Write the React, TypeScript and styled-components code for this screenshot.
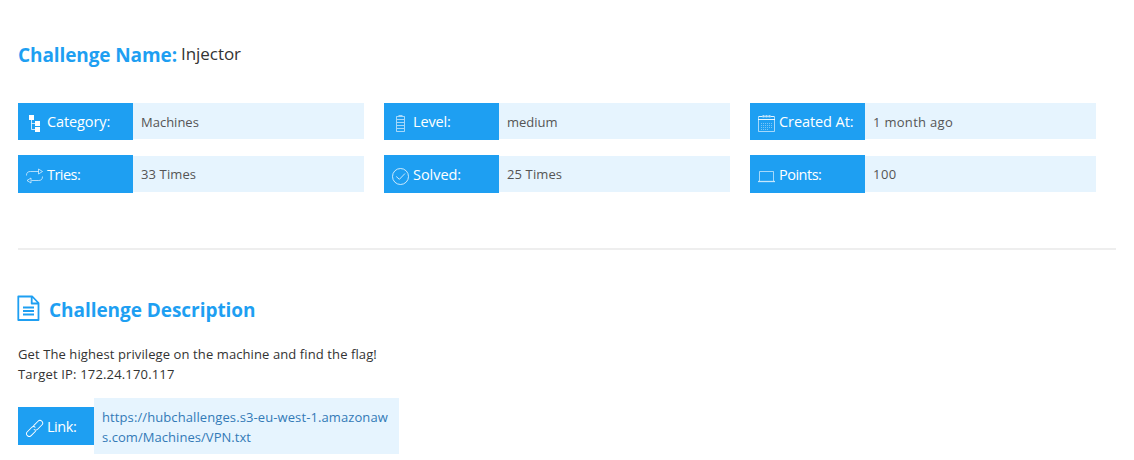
import React from "react";
import styled, { createGlobalStyle } from "styled-components";

const GlobalStyle = createGlobalStyle`
  * { box-sizing: border-box; }
  body {
    margin: 0;
    background: #fff;
    color: #333;
    font-family: "Segoe UI", "Open Sans", "Noto Sans", sans-serif;
    font-size: 13px;
    line-height: 20px;
  }
`;

const Page = styled.main`
  width: 1134px;
  height: 460px;
  padding: 40px 18px 0;
  overflow: hidden;
`;

const TitleRow = styled.header`
  display: flex;
  height: 63px;
  white-space: nowrap;
`;

const Heading = styled.h1<{ $spacing: number }>`
  margin: 0;
  font-size: 19px;
  font-weight: 700;
  line-height: 30px;
  letter-spacing: ${(p) => p.$spacing}px;
  color: #1e9ff2;
`;

const ChallengeName = styled.span`
  margin-left: 4px;
  font-size: 17px;
  line-height: 28px;
  letter-spacing: -0.05px;
`;

const Facts = styled.section`
  display: grid;
  grid-template-columns: repeat(3, 346px);
  grid-template-rows: 37px 38px;
  gap: 15px 20px;
`;

const Fact = styled.div`
  display: flex;
  align-items: flex-start;
`;

const Label = styled.div<{ $width?: number; $second?: boolean }>`
  display: flex;
  flex: none;
  width: ${(p) => p.$width ?? 115}px;
  height: ${(p) => (p.$second ? 38 : 37)}px;
  padding: ${(p) => (p.$second ? 9 : 8)}px 0 0 8px;
  background: #1e9ff2;
  color: #fff;
  font-size: 14.5px;
  line-height: 21px;
  white-space: nowrap;

  svg {
    flex: none;
    width: 18px;
    height: 18px;
    margin: 3px 3px 0 0;
  }
`;

const Tracked = styled.span<{ $spacing: number }>`
  letter-spacing: ${(p) => p.$spacing}px;
`;

const Value = styled.div<{ $second?: boolean }>`
  flex: 1;
  height: 36px;
  margin-top: ${(p) => (p.$second ? 1 : 0)}px;
  padding: ${(p) => (p.$second ? 8 : 9)}px 8px 0;
  background: #e6f4fe;
  color: #555;
  white-space: nowrap;
`;

const Divider = styled.hr`
  height: 2px;
  margin: 55px 0 45px;
  border: 0;
  background: #eee;
`;

const SectionTitle = styled.div`
  display: flex;
  height: 49px;

  svg {
    width: 23px;
    height: 26px;
    margin-right: 8px;
    overflow: visible;
  }
`;

const Description = styled.p`
  margin: 0 0 14px;
  white-space: nowrap;
`;

const LinkRow = styled.div`
  display: flex;
  align-items: center;
  width: 381px;
  height: 56px;
`;

const LinkBox = styled.div`
  flex: 1;
  height: 56px;
  padding: 9px 0 0 8px;
  background: #e6f4fe;
`;

const DownloadLink = styled.a`
  color: #337ab7;
  text-decoration: none;
  white-space: nowrap;
`;

const TreeIcon = () => (
  <svg viewBox="0 0 18 18" fill="#fff">
    <path d="M3 1h5v5H3zM9 7h5v5H9zM9 13h5v5H9z" />
    <path d="M5.5 6v9.5H9M5.5 9.5H9" fill="none" stroke="#fff" strokeOpacity=".75" />
  </svg>
);

const BatteryIcon = () => (
  <svg viewBox="0 0 18 18" fill="none" stroke="#fff" strokeOpacity=".6">
    <path d="M4.5 2.5h8v15h-8zM6.5 1.5h4" />
    <path d="M5 5.5h7M5 8.5h7M5 11.5h7M5 14.5h7" />
  </svg>
);

const CalendarIcon = () => (
  <svg viewBox="0 0 18 18" fill="none" stroke="#fff" strokeOpacity=".7">
    <path d="M.5 2.5h16v15H.5z" strokeOpacity=".6" />
    <path d="M0 5.5h17" strokeOpacity=".9" />
    <path d="M1 2.5h3M13 2.5h3" />
    <path d="M4.500 1.500h8M4.500 3h8" strokeDasharray="2 1" strokeWidth=".9" />
    <path d="M3 9.5h11M3 11.5h11M3 13.5h11M3 15.5h8" strokeDasharray="1 1" strokeOpacity=".4" />
  </svg>
);

const RepeatIcon = () => (
  <svg viewBox="0 0 18 18" fill="none" stroke="#fff" strokeOpacity=".65">
    <path d="M.5 8.500V8C.7 5.500 2 4.500 4.500 4.500h8M12.500 2v5l4-2.500zM16.500 9.500c0 3-1.500 4-4 4h-7M5 11v5L1 13.500z" />
  </svg>
);

const CheckIcon = () => (
  <svg viewBox="0 0 18 18" fill="none" stroke="#fff" strokeOpacity=".85" strokeWidth=".9">
    <circle cx="8.5" cy="9.5" r="8" />
    <path d="M4.200 9.500l3.200 2.800 5.600-5.800" />
  </svg>
);

const LaptopIcon = () => (
  <svg viewBox="0 0 18 18" fill="none" stroke="#fff" strokeOpacity=".75">
    <path d="M1.5 14V4.500h14V14" strokeWidth=".8" />
    <path d="M0 14.500h17" strokeWidth="1.300" />
  </svg>
);

const ChainIcon = () => (
  <svg viewBox="0 0 18 18" fill="none" stroke="#fff" strokeWidth=".95">
    <g transform="translate(-.3 .5) rotate(-45 9 9)">
      <path d="M8 11.500H1.500a2.700 2.700 0 0 1 0-5.400h6a2.700 2.700 0 0 1 2.700 2.700" />
      <path d="M10 6.200h6.500a2.700 2.700 0 0 1 0 5.400h-6a2.700 2.700 0 0 1-2.700-2.700" />
    </g>
  </svg>
);

const DocumentIcon = () => (
  <svg viewBox="0 0 23 26" fill="none" stroke="#1e9ff2" strokeWidth="1.800" strokeLinejoin="round">
    <path d="M.3 1.500h14L20.500 8V25H.3zM13.700 1.500V8.500h6.800M5 12.500h11M5 16h11M5 19.500h11" />
  </svg>
);

const facts = [
  { icon: <TreeIcon />, label: "Category:", value: "Machines", ls: -0.1, vs: 0 },
  { icon: <BatteryIcon />, label: "Level:", value: "medium", ls: -0.15, vs: 0 },
  { icon: <CalendarIcon />, label: "Created At:", value: "1 month ago", ls: -0.08, vs: 0.3 },
  { icon: <RepeatIcon />, label: "Tries:", value: "33 Times", ls: -0.55, vs: 0.12 },
  { icon: <CheckIcon />, label: "Solved:", value: "25 Times", ls: -0.05, vs: 0.12 },
  { icon: <LaptopIcon />, label: "Points:", value: "100", ls: -0.5, vs: 0.5 },
];

export default function App() {
  return (
    <Page>
      <GlobalStyle />
      <TitleRow>
        <Heading $spacing={-0.1}>Challenge Name:</Heading>
        <ChallengeName>Injector</ChallengeName>
      </TitleRow>
      <Facts>
        {facts.map((f, i) => (
          <Fact key={f.label}>
            <Label $second={i > 2}>
              {f.icon}
              <Tracked $spacing={f.ls}>{f.label}</Tracked>
            </Label>
            <Value $second={i > 2}>
              <Tracked $spacing={f.vs}>{f.value}</Tracked>
            </Value>
          </Fact>
        ))}
      </Facts>
      <Divider />
      <SectionTitle>
        <DocumentIcon />
        <Heading as="h2" $spacing={-0.05}>Challenge Description</Heading>
      </SectionTitle>
      <Description>
        <Tracked $spacing={0.1}>Get The highest privilege on the machine and find the flag!</Tracked>
        <br />
        <Tracked $spacing={0.17}>Target IP: 172.24.170.117</Tracked>
      </Description>
      <LinkRow>
        <Label $width={76} $second>
          <ChainIcon />
          <Tracked $spacing={-0.45}>Link:</Tracked>
        </Label>
        <LinkBox>
          <DownloadLink href="https://hubchallenges.s3-eu-west-1.amazonaws.com/Machines/VPN.txt">
            <Tracked $spacing={0.1}>https://hubchallenges.s3-eu-west-1.amazonaw</Tracked>
            <br />
            <Tracked $spacing={0.05}>s.com/Machines/VPN.txt</Tracked>
          </DownloadLink>
        </LinkBox>
      </LinkRow>
    </Page>
  );
}
